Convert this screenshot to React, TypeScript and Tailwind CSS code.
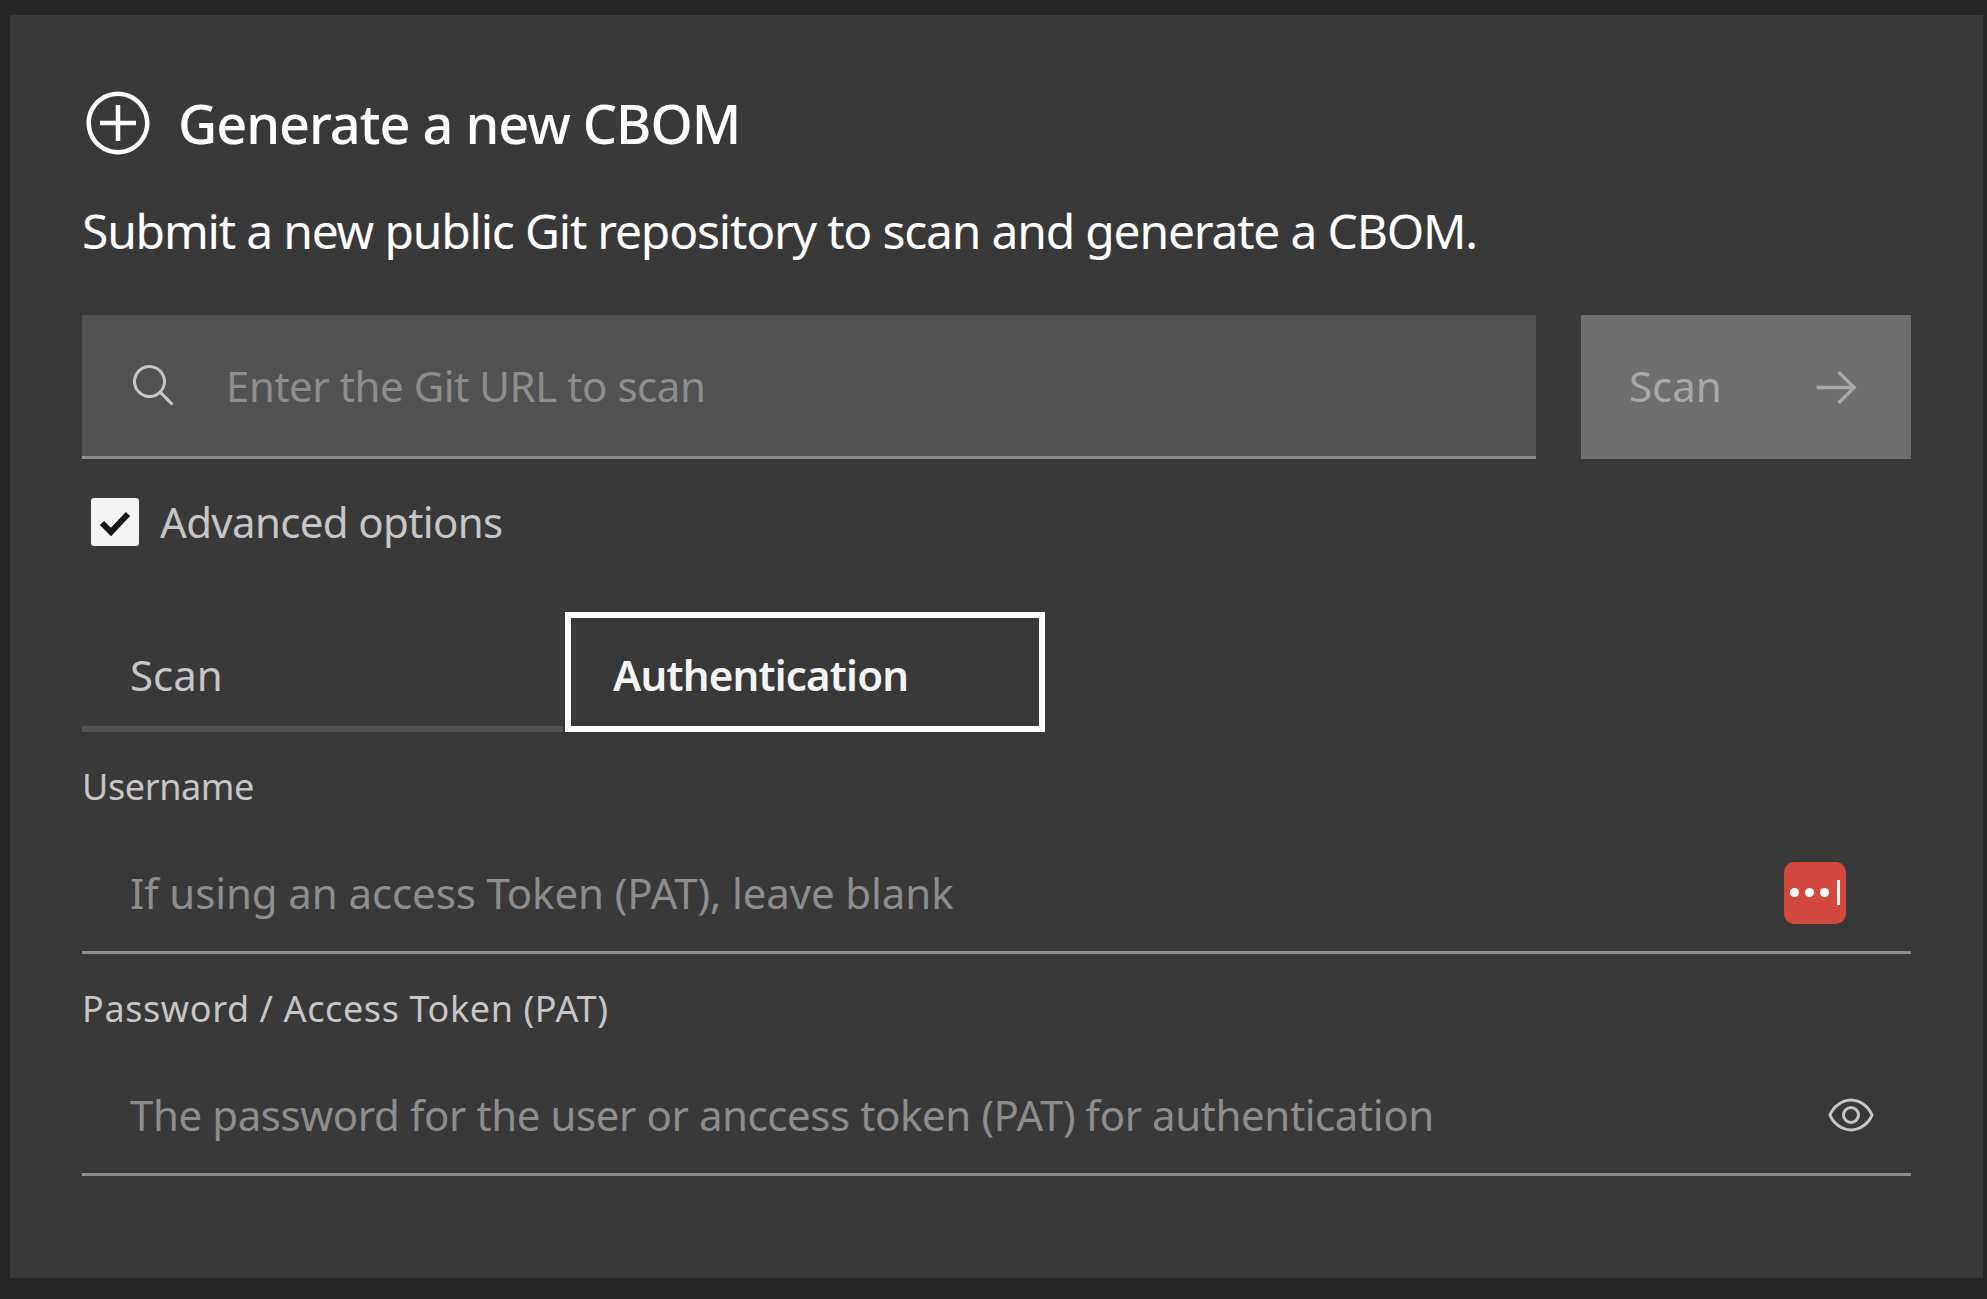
import React from 'react';

const font = "font-['Noto_Sans',sans-serif]";

const Field: React.FC<{ label: string; labelClass: string; placeholder: string; inputClass: string; children: React.ReactNode; className: string }> = ({ label, labelClass, placeholder, inputClass, children, className }) => (
  <div className={className}>
    <label className={`block h-[48px] text-[36px] leading-[48px] text-[#c6c6c6] ${labelClass}`}>{label}</label>
    <div className="mt-[23px] h-[120px] flex items-center border-b-[3px] border-[#8d8d8d] pl-[48px]">
      <input
        placeholder={placeholder}
        className={`flex-1 bg-transparent outline-none text-[42px] text-[#f4f4f4] placeholder:text-[#8d8d8d] ${inputClass}`}
      />
      {children}
    </div>
  </div>
);

export default function App() {
  return (
    <div className={`${font} min-h-screen bg-[#262626] pt-[15px] pl-[10px] pr-[4px] pb-[21px]`}>
      <div className="h-[1263px] bg-[#393939] px-[72px] pt-[72px]">
        <div className="flex items-center gap-[24px] h-[72px]">
          <svg viewBox="0 0 32 32" className="w-[72px] h-[72px] fill-white shrink-0">
            <path d="M16,4c6.6,0,12,5.4,12,12s-5.4,12-12,12S4,22.6,4,16S9.4,4,16,4 M16,2C8.3,2,2,8.3,2,16s6.3,14,14,14s14-6.3,14-14S23.7,2,16,2z" />
            <path d="M24 15 17 15 17 8 15 8 15 15 8 15 8 17 15 17 15 24 17 24 17 17 24 17z" />
          </svg>
          <h1 className="text-[54px] font-medium text-white tracking-[-1px] leading-[72px]">Generate a new CBOM</h1>
        </div>
        <p className="mt-[36px] text-[48px] leading-[72px] text-white tracking-[-1.2px]">
          Submit a new public Git repository to scan and generate a CBOM.
        </p>
        <div className="mt-[48px] flex gap-[45px]">
          <div className="flex-1 h-[144px] bg-[#525252] border-b-[3px] border-[#8d8d8d] flex items-center pl-[48px]">
            <svg viewBox="0 0 32 32" className="w-[48px] h-[48px] fill-[#c6c6c6] shrink-0">
              <path d="M29,27.5859l-7.5521-7.5521a11.0177,11.0177,0,1,0-1.4141,1.4141L27.5859,29ZM4,13a9,9,0,1,1,9,9A9.01,9.01,0,0,1,4,13Z" />
            </svg>
            <input
              placeholder="Enter the Git URL to scan"
              className="flex-1 ml-[48px] bg-transparent outline-none text-[42px] tracking-[-0.45px] text-[#f4f4f4] placeholder:text-[#8d8d8d]"
            />
          </div>
          <button className="w-[330px] h-[144px] bg-[#6f6f6f] text-[#a8a8a8] text-[42px] flex items-center justify-between pl-[48px] pr-[48px]">
            <span className="-mt-[3px]">Scan</span>
            <svg viewBox="0 0 32 32" className="w-[53px] h-[53px] fill-[#a8a8a8]">
              <path d="M18 6 16.57 7.393 24.15 15 4 15 4 17 24.15 17 16.57 24.573 18 26 28 16 18 6z" />
            </svg>
          </button>
        </div>
        <div className="mt-[39px] h-[48px] ml-[9px] flex items-center gap-[21px]">
          <span className="w-[48px] h-[48px] bg-[#f4f4f4] rounded-[3px] flex items-center justify-center">
            <svg viewBox="0 0 48 48" className="w-[48px] h-[48px] fill-none stroke-[#161616] stroke-[6px]">
              <path d="M11 25 L20 34 L37 16" />
            </svg>
          </span>
          <span className="-mt-[2px] text-[42px] tracking-[-0.65px] text-[#c6c6c6]">Advanced options</span>
        </div>
        <div className="mt-[66px] flex h-[120px]">
          <button className="w-[481px] mr-[2px] text-left pl-[48px] pt-[10px] border-b-[6px] border-[#525252] text-[42px] text-[#c6c6c6]">Scan</button>
          <button className="w-[480px] text-left pl-[42px] pt-[4px] border-[6px] border-white text-[42px] font-semibold text-[#f4f4f4] tracking-[-0.8px]">Authentication</button>
        </div>
        <Field
          className="mt-[31px]"
          label="Username"
          labelClass="tracking-[-0.4px]"
          placeholder="If using an access Token (PAT), leave blank"
          inputClass="tracking-[-0.1px]"
        >
          <span className="relative w-[62px] h-[62px] mr-[65px] rounded-[10px] bg-[#d1483e] flex items-center pl-[6px] gap-[6px]">
            <i className="w-[9px] h-[9px] rounded-full bg-white" />
            <i className="w-[9px] h-[9px] rounded-full bg-white" />
            <i className="w-[9px] h-[9px] rounded-full bg-white" />
            <i className="w-[3px] h-[25px] ml-[2px] bg-[#f4f4f4]" />
          </span>
        </Field>
        <Field
          className="mt-[31px]"
          label="Password / Access Token (PAT)"
          labelClass="tracking-[0.6px]"
          placeholder="The password for the user or anccess token (PAT) for authentication"
          inputClass="tracking-[-0.41px]"
        >
          <svg viewBox="0 0 32 32" className="w-[48px] h-[48px] mr-[36px] fill-[#c6c6c6] shrink-0">
            <path d="M30.94,15.66A16.69,16.69,0,0,0,16,5,16.69,16.69,0,0,0,1.06,15.66a1,1,0,0,0,0,.68A16.69,16.69,0,0,0,16,27,16.69,16.69,0,0,0,30.94,16.34,1,1,0,0,0,30.94,15.66ZM16,25c-5.3,0-10.9-3.93-12.93-9C5.1,10.93,10.7,7,16,7s10.9,3.93,12.93,9C26.9,21.07,21.3,25,16,25Z" />
            <path d="M16,10a6,6,0,1,0,6,6A6,6,0,0,0,16,10Zm0,10a4,4,0,1,1,4-4A4,4,0,0,1,16,20Z" />
          </svg>
        </Field>
      </div>
    </div>
  );
}
